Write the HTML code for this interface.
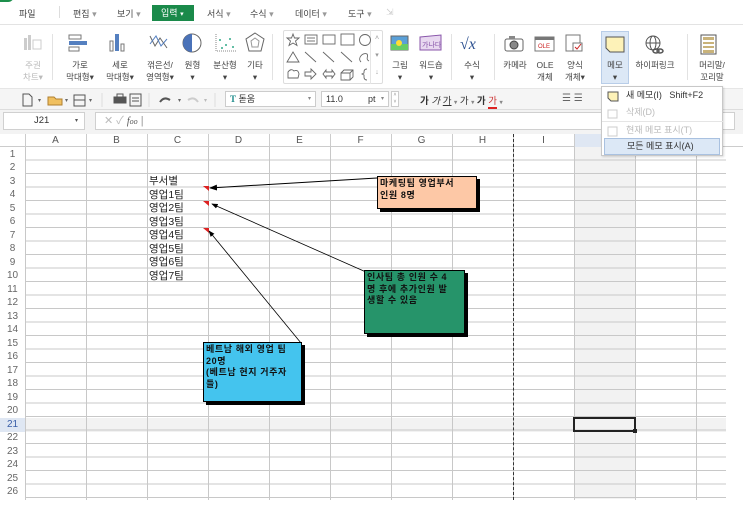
<!DOCTYPE html>
<html><head><meta charset="utf-8">
<style>
*{margin:0;padding:0;box-sizing:border-box}
body{width:743px;height:514px;overflow:hidden;background:#fff;font-family:"Liberation Sans","Noto Sans CJK KR",sans-serif;font-size:9px;color:#333;position:relative}
.a{position:absolute;white-space:nowrap}
.t{font-size:9px;color:#444}
.lbl{position:absolute;text-align:center;font-size:8.5px;line-height:12px;color:#444}
.ch{position:absolute;top:134px;height:13px;width:61px;text-align:center;font-size:10px;line-height:13px;color:#555}
.rh{position:absolute;left:0;width:25px;text-align:center;font-size:10px;color:#666;height:13.5px;line-height:13.5px}
.cell{position:absolute;left:149px;font-size:10.5px;color:#222;line-height:13.5px}
.note{position:absolute;border:1px solid #000;box-shadow:3px 3px 0 #000;font-weight:bold;font-size:9px;line-height:11.5px;color:#111;padding:1px 2px;white-space:nowrap;letter-spacing:0.6px;overflow:hidden}
.mi{position:absolute;left:0;width:121px;height:17px;font-size:9px;line-height:17px;padding-left:24px}
</style></head><body>
<div class="a" style="left:0;top:0;width:743px;height:25px;background:#fff;border-bottom:1px solid #e3e3e3"></div>
<div class="a" style="left:0;top:-6px;width:14px;height:8px;background:#1d8f4c;border-radius:0 0 6px 0"></div>
<div class="a t" style="left:19px;top:7px;font-size:9px">파일</div>
<div class="a" style="left:59px;top:6px;width:1px;height:12px;background:#ddd"></div>
<div class="a t" style="left:73px;top:7px">편집 <span style="color:#999">▾</span></div>
<div class="a t" style="left:117px;top:7px">보기 <span style="color:#999">▾</span></div>
<div class="a" style="left:152px;top:5px;width:42px;height:16px;background:#1a8a4a;color:#fff;font-size:9px;line-height:16px;padding-left:9px">입력 <span style="font-size:7px">▾</span></div>
<div class="a t" style="left:207px;top:7px">서식 <span style="color:#999">▾</span></div>
<div class="a t" style="left:250px;top:7px">수식 <span style="color:#999">▾</span></div>
<div class="a t" style="left:295px;top:7px">데이터 <span style="color:#999">▾</span></div>
<div class="a t" style="left:348px;top:7px">도구 <span style="color:#999">▾</span></div>
<div class="a" style="left:386px;top:7px;color:#ccc">⇲</div>

<div class="a" style="left:0;top:26px;width:743px;height:62px;background:#fff"></div>
<svg class="a" style="left:0;top:30px" width="290" height="34">
 <g fill="#ccc"><rect x="24" y="8" width="3" height="12"/><rect x="28" y="5" width="3" height="15"/><rect x="33" y="10" width="8" height="9" fill="none" stroke="#ccc"/></g>
 <g><rect x="69" y="5" width="12" height="4" fill="none" stroke="#777"/><rect x="69" y="11" width="18" height="4" fill="#5580c0"/><rect x="69" y="17" width="10" height="4" fill="none" stroke="#777"/></g>
 <g><rect x="110" y="11" width="3" height="10" fill="none" stroke="#777"/><rect x="115" y="4" width="4" height="17" fill="#5580c0"/><rect x="121" y="14" width="3" height="7" fill="none" stroke="#777"/></g>
 <g stroke="#666" fill="none"><polyline points="150,6 155,16 160,8 167,18"/><polyline points="150,14 156,6 161,16 167,9" stroke="#5580c0"/></g>
 <g><circle cx="192" cy="13" r="9" fill="#fff" stroke="#666"/><path d="M192 13 L192 4 A9 9 0 0 0 183 13 A9 9 0 0 0 192 22 Z" fill="#4a72b8"/></g>
 <g fill="#3a8"><circle cx="220" cy="10" r="1"/><circle cx="226" cy="15" r="1"/><circle cx="230" cy="9" r="1"/><circle cx="222" cy="18" r="1"/><circle cx="233" cy="17" r="1"/><path d="M216 4 V21 H236" stroke="#888" fill="none" stroke-dasharray="1 1"/></g>
 <g fill="none" stroke="#666"><polygon points="255,3 264,9 261,21 249,21 246,9"/><polygon points="255,8 259,11 258,17 252,17 251,11" stroke="#999"/></g>
</svg>
<div class="lbl" style="left:18px;top:59px;width:30px;color:#bbb">주권<br>차트▾</div>
<div class="a" style="left:52px;top:34px;width:1px;height:46px;background:#e2e2e2"></div>
<div class="lbl" style="left:60px;top:59px;width:40px">가로<br>막대형▾</div>
<div class="lbl" style="left:100px;top:59px;width:40px">세로<br>막대형▾</div>
<div class="lbl" style="left:140px;top:59px;width:40px">꺾은선/<br>영역형▾</div>
<div class="lbl" style="left:180px;top:59px;width:25px">원형<br>▾</div>
<div class="lbl" style="left:208px;top:59px;width:34px">분산형<br>▾</div>
<div class="lbl" style="left:243px;top:59px;width:24px">기타<br>▾</div>
<div class="a" style="left:272px;top:34px;width:1px;height:46px;background:#e2e2e2"></div>
<div class="a" style="left:283px;top:30px;width:100px;height:54px;border:1px solid #ddd;border-radius:2px"></div>
<div class="a" style="left:370px;top:30px;width:13px;height:54px;border-left:1px solid #e5e5e5;color:#999;font-size:7px;line-height:17px;text-align:center">˄<br>▾<br>↓</div>
<svg class="a" style="left:285px;top:32px" width="86" height="52" fill="none" stroke="#666" stroke-width="0.9">
 <polygon points="8,2 9.5,6 14,6 10.5,9 12,13.5 8,11 4,13.5 5.5,9 2,6 6.5,6"/>
 <rect x="20" y="3" width="12" height="9"/><line x1="22" y1="6" x2="30" y2="6"/><line x1="22" y1="9" x2="30" y2="9"/>
 <rect x="38" y="3" width="12" height="9"/>
 <rect x="56" y="2" width="13" height="11"/>
 <circle cx="80" cy="8" r="5.5"/>
 <polygon points="8,20 14,30 2,30"/>
 <line x1="20" y1="20" x2="31" y2="30"/><line x1="38" y1="20" x2="49" y2="30"/><line x1="56" y1="20" x2="67" y2="30"/>
 <path d="M76 30 C72 26 78 20 82 22 C84 24 80 27 84 29"/>
 <path d="M3 46 L3 40 Q6 36 9 39 Q13 37 14 42 L13 46 Z"/>
 <polygon points="20,40 26,40 26,37 31,42 26,47 26,44 20,44"/>
 <polygon points="38,42 41,38 41,40 47,40 47,38 50,42 47,46 47,44 41,44 41,46"/>
 <path d="M56 41 H65 V48 H56 Z M56 41 L59 38 H68 V45 L65 48 M65 41 L68 38"/>
 <path d="M82 37 Q79 37 79 40 V41 L77 42 L79 43 V45 Q79 48 82 48"/>
</svg>
<svg class="a" style="left:388px;top:33px" width="360" height="30">
 <rect x="3" y="3" width="17" height="14" fill="#5aa0d8" stroke="#666"/><rect x="3" y="11" width="17" height="6" fill="#6c6"/><circle cx="11" cy="10" r="3" fill="#fd3"/>
 <polygon points="32,4 53,2 53,17 32,17" fill="#e8d8f0" stroke="#85a"/><text x="34" y="14" font-size="7" fill="#85a" font-family="Noto Sans CJK KR">가나다</text>
 <text x="72" y="16" font-size="16" fill="#2a4f8f" font-family="Liberation Serif" font-style="italic">√x</text>
 <rect x="117" y="6" width="18" height="12" rx="2" fill="none" stroke="#666"/><circle cx="126" cy="12" r="4" fill="#888" stroke="#444"/><rect x="121" y="3" width="6" height="3" fill="#888"/>
 <rect x="147" y="4" width="19" height="14" fill="#fff" stroke="#777"/><rect x="147" y="4" width="19" height="3" fill="#777"/><text x="150" y="15" font-size="6" fill="#c22">OLE</text>
 <rect x="178" y="2" width="14" height="16" fill="#fff" stroke="#777"/><rect x="185" y="10" width="9" height="8" fill="#fff" stroke="#777"/><path d="M187 14 l2 2 l4 -5" stroke="#c22" fill="none"/>
</svg>
<div class="lbl" style="left:386px;top:59px;width:28px">그림<br>▾</div>
<div class="lbl" style="left:416px;top:59px;width:30px">워드숍<br>▾</div>
<div class="a" style="left:451px;top:34px;width:1px;height:46px;background:#e2e2e2"></div>
<div class="lbl" style="left:458px;top:59px;width:28px">수식<br>▾</div>
<div class="a" style="left:494px;top:34px;width:1px;height:46px;background:#e2e2e2"></div>
<div class="lbl" style="left:497px;top:59px;width:36px">카메라</div>
<div class="lbl" style="left:532px;top:59px;width:26px">OLE<br>개체</div>
<div class="lbl" style="left:560px;top:59px;width:30px">양식<br>개체▾</div>
<div class="a" style="left:601px;top:31px;width:28px;height:53px;background:#dce8f6;border:1px solid #b8cde8"></div>
<svg class="a" style="left:604px;top:35px" width="22" height="20"><path d="M2 2 H20 V17 H6 L2 13 Z" fill="#fdf2b8" stroke="#555"/></svg>
<div class="lbl" style="left:601px;top:59px;width:28px">메모<br>▾</div>
<svg class="a" style="left:642px;top:34px" width="24" height="22" fill="none" stroke="#555"><circle cx="11" cy="9" r="7"/><ellipse cx="11" cy="9" rx="3" ry="7"/><line x1="4" y1="9" x2="18" y2="9"/><ellipse cx="14" cy="17" rx="3" ry="2" stroke-width="1.5"/><ellipse cx="18" cy="17" rx="3" ry="2" stroke-width="1.5"/></svg>
<div class="lbl" style="left:630px;top:59px;width:50px">하이퍼링크</div>
<div class="a" style="left:687px;top:34px;width:1px;height:46px;background:#e2e2e2"></div>
<svg class="a" style="left:700px;top:34px" width="18" height="22"><rect x="1" y="1" width="15" height="19" fill="#fff" stroke="#555"/><g fill="#c9b37a"><rect x="3" y="3" width="11" height="3"/><rect x="3" y="8" width="11" height="2"/><rect x="3" y="12" width="11" height="2"/><rect x="3" y="16" width="11" height="3"/></g></svg>
<div class="lbl" style="left:692px;top:59px;width:40px">머리말/<br>꼬리말</div>

<div class="a" style="left:0;top:88px;width:743px;height:22px;background:#f5f5f5;border-top:1px solid #e6e6e6;border-bottom:1px solid #ddd"></div>
<svg class="a" style="left:18px;top:92px" width="580" height="16" fill="none" stroke="#555">
 <path d="M5 2 H11 L14 5 V14 H5 Z"/><text x="20" y="10" font-size="6" fill="#666" stroke="none">▾</text>
 <path d="M30 5 H36 L38 7 H44 V13 H30 Z" fill="#f0c060" stroke="#b08030"/><text x="47" y="10" font-size="6" fill="#666" stroke="none">▾</text>
 <rect x="56" y="3" width="11" height="11"/><line x1="56" y1="8" x2="67" y2="8"/><text x="71" y="10" font-size="6" fill="#666" stroke="none">▾</text>
 <line x1="84" y1="1" x2="84" y2="15" stroke="#ddd"/>
 <rect x="96" y="5" width="12" height="6" fill="#555"/><rect x="99" y="2" width="6" height="3"/>
 <rect x="112" y="2" width="11" height="12"/><line x1="114" y1="6" x2="121" y2="6"/><line x1="114" y1="9" x2="121" y2="9"/>
 <line x1="131" y1="1" x2="131" y2="15" stroke="#ddd"/>
 <path d="M142 10 Q146 4 152 8" stroke-width="2"/><text x="160" y="10" font-size="6" fill="#666" stroke="none">▾</text>
 <path d="M170 8 Q176 4 180 10" stroke="#ccc" stroke-width="2"/><text x="186" y="10" font-size="6" fill="#bbb" stroke="none">▾</text>
 <line x1="197" y1="1" x2="197" y2="15" stroke="#ddd"/>
</svg>
<div class="a" style="left:225px;top:91px;width:91px;height:16px;background:#fff;border:1px solid #ccc;font-size:9px;line-height:14px;padding-left:4px"><span style="color:#1a8a8a;font-weight:bold;font-family:'Liberation Serif'">T</span> 돋움<span style="position:absolute;right:4px;color:#888;font-size:6px">▾</span></div>
<div class="a" style="left:321px;top:91px;width:68px;height:16px;background:#fff;border:1px solid #ccc;font-size:9px;line-height:14px;padding-left:4px">11.0<span style="position:absolute;left:46px">pt</span><span style="position:absolute;right:4px;color:#888;font-size:6px">▾</span></div>
<div class="a" style="left:391px;top:91px;width:8px;height:16px;border:1px solid #ccc;background:#fff;font-size:5px;color:#888;line-height:7px;text-align:center">˄<br>˅</div>
<div class="a" style="left:420px;top:93px;font-size:9.5px;color:#333;font-weight:bold">가 <span style="font-weight:normal;font-style:italic">가</span> <span style="text-decoration:underline;font-weight:normal">가</span> <span style="color:#888;font-size:6px">▾</span> <span style="font-weight:normal">가</span> <span style="color:#888;font-size:6px">▾</span> 가 <span style="color:#c33;border-bottom:2px solid #d22;font-weight:normal">가</span> <span style="color:#888;font-size:6px">▾</span></div>
<div class="a" style="left:562px;top:93px;font-size:10px;color:#666">☰ ☰</div>

<div class="a" style="left:0;top:110px;width:743px;height:24px;background:#f3f3f3"></div>
<div class="a" style="left:3px;top:112px;width:82px;height:18px;background:#fff;border:1px solid #d0d0d0;font-size:9.5px;line-height:16px;padding-left:30px">J21<span style="position:absolute;right:6px;font-size:6px;color:#555">▾</span></div>
<div class="a" style="left:95px;top:112px;width:640px;height:18px;background:#fff;border:1px solid #d0d0d0;font-size:11px;line-height:16px;padding-left:8px;color:#bbb">✕ ✓ <span style="color:#555;font-style:italic;font-family:'Liberation Serif';font-size:10px">f<span style="font-size:8px">oo</span></span> <span style="color:#999">|</span></div>

<div class="a" style="left:0;top:134px;width:743px;height:13px;background:#fff;border-bottom:1px solid #ccc"></div>
<div class="a" style="left:574px;top:134px;width:61px;height:13px;background:#dfe7f3"></div>
<div class="a" style="left:574px;top:147px;width:61px;height:352px;background:#f2f2f2"></div>
<div class="a" style="left:25px;top:418px;width:701px;height:13.5px;background:#f2f2f2"></div>
<div class="a" style="left:0;top:418px;width:25px;height:13.5px;background:#dfe7f3"></div>
<div class="a" style="left:25px;top:147px;width:701px;height:352.5px;
 background-image:repeating-linear-gradient(to bottom,transparent 0,transparent 12.5px,#c8c8c8 12.5px,#c8c8c8 13.5px),repeating-linear-gradient(to right,#c8c8c8 0,#c8c8c8 1px,transparent 1px,transparent 61px)"></div>
<div class="a" style="left:25px;top:134px;width:701px;height:13px;background-image:repeating-linear-gradient(to right,#ccc 0,#ccc 1px,transparent 1px,transparent 61px)"></div>
<div class="a" style="left:513px;top:134px;width:0;height:366px;border-left:1px dashed #333"></div>
<div class="ch" style="left:25px">A</div><div class="ch" style="left:86px">B</div><div class="ch" style="left:147px">C</div><div class="ch" style="left:208px">D</div><div class="ch" style="left:269px">E</div><div class="ch" style="left:330px">F</div><div class="ch" style="left:391px">G</div><div class="ch" style="left:452px">H</div><div class="ch" style="left:513px">I</div><div class="ch" style="left:574px">J</div><div class="ch" style="left:635px">K</div>
<div class="rh" style="top:147.5px">1</div><div class="rh" style="top:161px">2</div><div class="rh" style="top:174.5px">3</div><div class="rh" style="top:188px">4</div><div class="rh" style="top:201.5px">5</div><div class="rh" style="top:215px">6</div><div class="rh" style="top:228.5px">7</div><div class="rh" style="top:242px">8</div><div class="rh" style="top:255.5px">9</div><div class="rh" style="top:269px">10</div><div class="rh" style="top:282.5px">11</div><div class="rh" style="top:296px">12</div><div class="rh" style="top:309.5px">13</div><div class="rh" style="top:323px">14</div><div class="rh" style="top:336.5px">15</div><div class="rh" style="top:350px">16</div><div class="rh" style="top:363.5px">17</div><div class="rh" style="top:377px">18</div><div class="rh" style="top:390.5px">19</div><div class="rh" style="top:404px">20</div><div class="rh" style="top:417.5px;color:#3a5fa8">21</div><div class="rh" style="top:431px">22</div><div class="rh" style="top:444.5px">23</div><div class="rh" style="top:458px">24</div><div class="rh" style="top:471.5px">25</div><div class="rh" style="top:485px">26</div>

<div class="cell" style="top:175px">부서별</div>
<div class="cell" style="top:188.5px">영업1팀</div>
<div class="cell" style="top:202px">영업2팀</div>
<div class="cell" style="top:215.5px">영업3팀</div>
<div class="cell" style="top:229px">영업4팀</div>
<div class="cell" style="top:242.5px">영업5팀</div>
<div class="cell" style="top:256px">영업6팀</div>
<div class="cell" style="top:269.5px">영업7팀</div>

<div class="a" style="left:573px;top:417px;width:63px;height:15px;border:2px solid #222"></div>
<div class="a" style="left:633px;top:429px;width:4px;height:4px;background:#222"></div>

<svg class="a" style="left:0;top:0" width="743" height="514">
 <defs><marker id="ar" markerWidth="8" markerHeight="6" refX="7" refY="3" orient="auto"><path d="M0 0 L8 3 L0 6 Z" fill="#000"/></marker></defs>
 <g fill="#d22"><polygon points="203,186 209,186 209,191"/><polygon points="203,201 209,201 209,206"/><polygon points="203,228 209,228 209,233"/></g>
 <line x1="377" y1="178" x2="210" y2="188" stroke="#000" stroke-width="1" marker-end="url(#ar)"/>
 <line x1="366" y1="272" x2="212" y2="204" stroke="#000" stroke-width="0.8" marker-end="url(#ar)"/>
 <line x1="301" y1="343" x2="209" y2="231" stroke="#000" stroke-width="0.8" marker-end="url(#ar)"/>
</svg>
<div class="note" style="left:377px;top:176px;width:100px;height:33px;background:#fdc8a6">마케팅팀 영업부서<br>인원 8명</div>
<div class="note" style="left:364px;top:270px;width:101px;height:64px;background:#26946a">인사팀 총 인원 수 4<br>명 후에 추가인원 발<br>생할 수 있음</div>
<div class="note" style="left:203px;top:342px;width:99px;height:60px;background:#44c4ee">베트남 해외 영업 팀<br>20명<br>(베트남 현지 거주자<br>들)</div>

<div class="a" style="left:601px;top:86px;width:122px;height:70px;background:#fff;border:1px solid #c8c8c8;box-shadow:1px 1px 2px rgba(0,0,0,.15)">
 <svg class="a" style="left:5px;top:3px" width="14" height="64" fill="none">
  <path d="M1 2 H11 V11 H4 L1 8 Z" fill="#fdf2b8" stroke="#555"/>
  <path d="M1 20 H10 V28 H1 Z" stroke="#ccc"/>
  <path d="M1 37 H10 V46 H1 Z" stroke="#ccc"/>
  <rect x="1" y="53" width="10" height="9" fill="#fff" stroke="#666"/><path d="M3 57 l2 3 l5 -6" stroke="#c22" stroke-width="1.5"/>
 </svg>
 <div class="mi" style="top:0">새 메모(I)&nbsp;&nbsp;&nbsp;Shift+F2</div>
 <div class="mi" style="top:17px;color:#bbb">삭제(D)</div>
 <div class="mi" style="top:34px;color:#bbb;border-top:1px solid #e5e5e5">현재 메모 표시(T)</div>
 <div class="mi" style="top:51px;left:2px;width:116px;background:#dce8f6;border:1px solid #a9c1e0;padding-left:22px;line-height:15px">모든 메모 표시(A)</div>
</div>
</body></html>
